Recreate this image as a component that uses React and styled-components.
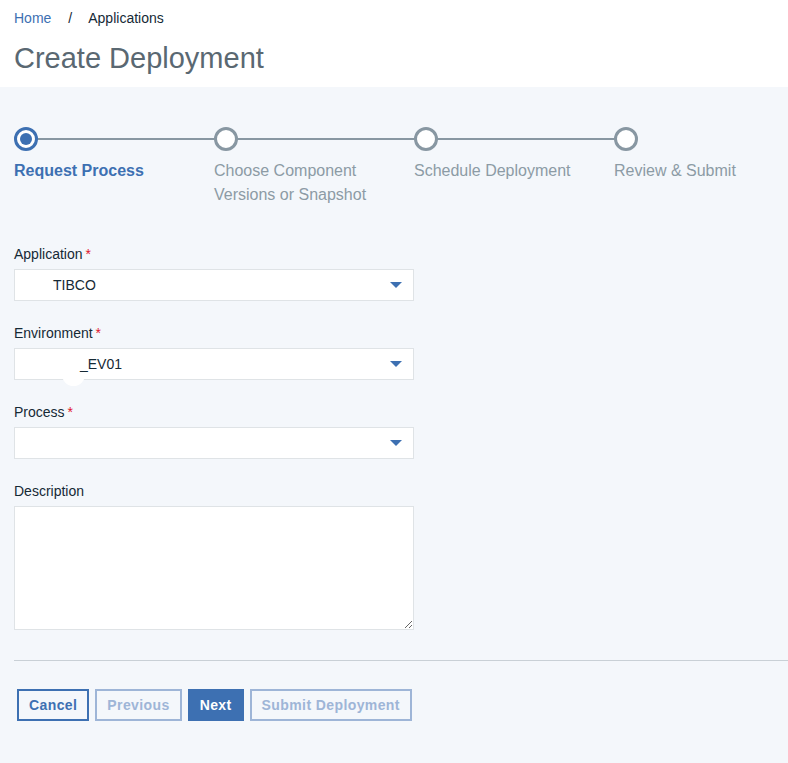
import styled, { createGlobalStyle } from "styled-components";

const BLUE = "#3d70b2";
const GRAY = "#8897a2";

const GlobalStyle = createGlobalStyle`
  html, body {
    margin: 0;
    padding: 0;
    background: #f4f7fb;
    font-family: "Liberation Sans", Arial, sans-serif;
  }
`;

const Page = styled.div`
  width: 788px;
  min-height: 763px;
  background: #f4f7fb;
`;

const Header = styled.header`
  background: #fff;
  height: 87px;
  padding: 10px 14px 0;
  box-sizing: border-box;
`;

const Crumbs = styled.nav`
  display: flex;
  align-items: center;
  font-size: 14px;
  line-height: 16px;
  color: #152935;

  & a {
    color: ${BLUE};
    text-decoration: none;
  }

  & .sep {
    margin: 0 16px 0 17px;
  }
`;

const Title = styled.h1`
  margin: 14px 0 0;
  font-size: 29px;
  line-height: 36px;
  font-weight: 400;
  color: #5a6872;
`;

const Main = styled.main`
  padding: 40px 0 0 14px;
`;

const Stepper = styled.ol`
  display: flex;
  list-style: none;
  margin: 0;
  padding: 0;
`;

const Step = styled.li`
  flex: 0 0 200px;
  position: relative;

  &:not(:last-child)::after {
    content: "";
    position: absolute;
    left: 22px;
    right: -2px;
    top: 11px;
    height: 2px;
    background: ${GRAY};
  }
`;

const Dot = styled.span`
  display: flex;
  align-items: center;
  justify-content: center;
  width: 24px;
  height: 24px;
  box-sizing: border-box;
  border-radius: 50%;
  border: 3px solid ${(p) => (p.$active ? BLUE : GRAY)};
  background: #fff;
  position: relative;
  z-index: 1;

  &::before {
    content: "";
    display: ${(p) => (p.$active ? "block" : "none")};
    width: 12px;
    height: 12px;
    border-radius: 50%;
    background: ${BLUE};
  }
`;

const StepLabel = styled.div`
  margin-top: 8px;
  font-size: 16px;
  line-height: 24px;
  color: ${(p) => (p.$active ? BLUE : "#8c9ba5")};
  font-weight: ${(p) => (p.$active ? 700 : 400)};
  width: 170px;
`;

const Form = styled.form`
  margin-top: 39px;
  width: 400px;
  display: flex;
  flex-direction: column;
  gap: 24px;
`;

const Field = styled.div`
  display: flex;
  flex-direction: column;
  gap: 7px;
`;

const Label = styled.label`
  font-size: 14px;
  line-height: 16px;
  color: #152935;

  & .req {
    color: #e0182d;
    margin-left: 3px;
  }
`;

const SelectBox = styled.div`
  position: relative;
  height: 32px;
  box-sizing: border-box;
  background: #fff;
  border: 1px solid #dfe3e6;
  display: flex;
  align-items: center;
  padding-left: ${(p) => p.$indent}px;
  font-size: 14px;
  color: #152935;

  & .value {
    position: relative;
    z-index: 1;
  }

  &::after {
    content: "";
    position: absolute;
    right: 11px;
    top: 12px;
    border-left: 6px solid transparent;
    border-right: 6px solid transparent;
    border-top: 6px solid ${BLUE};
  }
`;

const Blob = styled.span`
  position: absolute;
  left: 47px;
  top: 14px;
  width: 23px;
  height: 23px;
  border-radius: 50%;
  background: #fff;
`;

const TextArea = styled.textarea`
  height: 124px;
  box-sizing: border-box;
  border: 1px solid #dfe3e6;
  background: #fff;
  font-family: inherit;
  font-size: 14px;
  resize: vertical;
  outline: none;
`;

const Divider = styled.hr`
  margin: 30px 0 0;
  border: 0;
  border-top: 1px solid #c9d0d6;
`;

const Actions = styled.div`
  display: flex;
  gap: 6px;
  margin-top: 28px;
  padding-left: 3px;
`;

const Button = styled.button`
  height: 32px;
  box-sizing: border-box;
  padding: 0 10px;
  font-family: inherit;
  font-size: 14px;
  font-weight: 700;
  letter-spacing: 0.4px;
  border: 2px solid ${(p) => (p.$disabled ? "#9eb5d7" : BLUE)};
  background: ${(p) => (p.$primary ? BLUE : "transparent")};
  color: ${(p) => (p.$primary ? "#fff" : p.$disabled ? "#9eb5d7" : BLUE)};
  cursor: ${(p) => (p.$disabled ? "default" : "pointer")};
`;

const steps = [
  "Request Process",
  "Choose Component Versions or Snapshot",
  "Schedule Deployment",
  "Review & Submit",
];

export default function App() {
  return (
    <Page>
      <GlobalStyle />
      <Header>
        <Crumbs>
          <a href="#">Home</a>
          <span className="sep">/</span>
          <span>Applications</span>
        </Crumbs>
        <Title>Create Deployment</Title>
      </Header>
      <Main>
        <Stepper>
          {steps.map((s, i) => (
            <Step key={s}>
              <Dot $active={i === 0} />
              <StepLabel $active={i === 0}>{s}</StepLabel>
            </Step>
          ))}
        </Stepper>
        <Form>
          <Field>
            <Label>
              Application<span className="req">*</span>
            </Label>
            <SelectBox $indent={38}>
              <span className="value">TIBCO</span>
            </SelectBox>
          </Field>
          <Field>
            <Label>
              Environment<span className="req">*</span>
            </Label>
            <SelectBox $indent={65}>
              <span className="value">_EV01</span>
              <Blob />
            </SelectBox>
          </Field>
          <Field>
            <Label>
              Process<span className="req">*</span>
            </Label>
            <SelectBox $indent={16} />
          </Field>
          <Field>
            <Label>Description</Label>
            <TextArea />
          </Field>
        </Form>
        <Divider />
        <Actions>
          <Button type="button">Cancel</Button>
          <Button type="button" $disabled>Previous</Button>
          <Button type="button" $primary>Next</Button>
          <Button type="button" $disabled>Submit Deployment</Button>
        </Actions>
      </Main>
    </Page>
  );
}
